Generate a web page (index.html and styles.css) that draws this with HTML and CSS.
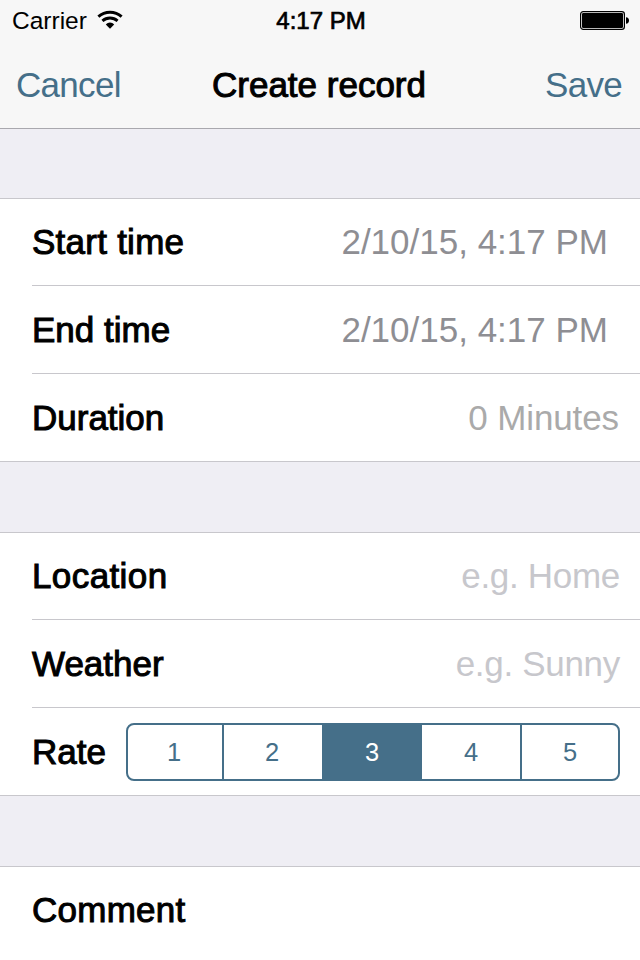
FILE: index.html
```html
<!DOCTYPE html>
<html lang="en">
<head>
<meta charset="utf-8">
<title>Create record</title>
<link rel="stylesheet" href="styles.css">
</head>
<body>
<header class="top">
  <div class="status">
    <div class="carrier"><span>Carrier</span>
      <svg class="wifi" width="26" height="20" viewBox="0 0 26 20" fill="none" stroke="#000">
        <path d="M1.400 6.600C8 .8 18 .8 24.600 6.600" stroke-width="3"/>
        <path d="M5.400 10.900C9.800 7 16.200 7 20.600 10.900" stroke-width="2.800"/>
        <path d="M8.800 14.600C11 11.800 15 11.800 17.200 14.600L13 18.800Z" fill="#000" stroke="none"/>
      </svg>
    </div>
    <div class="clock">4:17 PM</div>
    <svg class="battery" width="50" height="20" viewBox="0 0 50 20">
      <rect x=".6" y=".6" width="43.800" height="17.800" rx="2.600" fill="none" stroke="#000" stroke-width="1.200"/>
      <rect x="2" y="2" width="41" height="15" rx="1.200"/>
      <path d="M46 6.200Q49 6.500 49 9.500T46 12.800Z"/>
    </svg>
  </div>
  <nav class="nav">
    <a class="action">Cancel</a>
    <h1 class="title">Create record</h1>
    <a class="action save">Save</a>
  </nav>
</header>
<main>
  <section class="group first">
    <div class="row"><span class="label">Start time</span><span class="value date">2/10/15, 4:17 PM</span></div>
    <div class="row"><span class="label tight">End time</span><span class="value date">2/10/15, 4:17 PM</span></div>
    <div class="row"><span class="label tight">Duration</span><span class="value computed">0 Minutes</span></div>
  </section>
  <section class="group">
    <div class="row"><span class="label wide">Location</span><span class="value hint">e.g. Home</span></div>
    <div class="row"><span class="label tight">Weather</span><span class="value hint">e.g. Sunny</span></div>
    <div class="row"><span class="label tight">Rate</span>
      <div class="segments"><span>1</span><span>2</span><span class="on">3</span><span>4</span><span>5</span></div>
    </div>
  </section>
  <section class="group last">
    <div class="row"><span class="label">Comment</span></div>
  </section>
</main>
</body>
</html>
```
FILE: styles.css
```css
* { box-sizing: border-box; }
body {
  margin: 0;
  height: 960px;
  overflow: hidden;
  background: #efeef4;
  color: #000;
  font-family: "Liberation Sans", Arial, sans-serif;
  font-size: 35px;
  line-height: 40px;
}
.top {
  height: 129px;
  background: #f7f7f7;
  border-bottom: 1px solid #a9a8ae;
}
.status {
  display: grid;
  grid-template-columns: 1fr auto 1fr;
  align-items: center;
  height: 40px;
  padding: 1px 10px 0 12px;
  font-size: 24.5px;
}
.carrier { display: flex; align-items: center; gap: 10px; }
.wifi { margin-top: -2px; }
.clock { font-size: 24px; -webkit-text-stroke: .7px #000; }
.battery { justify-self: end; }
.nav {
  display: grid;
  grid-template-columns: 1fr auto 1fr;
  align-items: center;
  height: 88px;
  padding: 1px 18px 0 16px;
}
.action { color: #456f89; letter-spacing: -.7px; }
.save { justify-self: end; }
.title {
  margin: 0;
  font-size: 35px;
  font-weight: 400;
  -webkit-text-stroke: 1px #000;
}
.group {
  margin-top: 70px;
  padding-left: 32px;
  background: #fff;
  border-top: 1px solid #c8c7cc;
  border-bottom: 1px solid #c8c7cc;
}
.first { margin-top: 69px; }
.last { border-bottom: 0; }
.row {
  display: flex;
  align-items: center;
  justify-content: space-between;
  height: 88px;
  padding-right: 20px;
  border-bottom: 1px solid #c8c7cc;
}
.row:first-child { height: 87px; }
.row:last-child { height: 87px; border-bottom: 0; }
.last .row:last-child { height: 93px; padding-bottom: 7px; }
.label { letter-spacing: .25px; -webkit-text-stroke: 1px #000; }
.tight { letter-spacing: 0; }
.wide { letter-spacing: .4px; }
.value { color: #8e8e93; }
.date { margin-right: 12px; }
.computed { color: #aaa; letter-spacing: -.1px; margin-right: 1px; }
.hint { color: #c7c7cc; letter-spacing: -.3px; }
.segments {
  display: grid;
  grid-template-columns: 94px 100px 100px 98px 98px;
  width: 494px;
  height: 58px;
  border: 2px solid #456f89;
  border-radius: 8px;
  color: #456f89;
  font-size: 25.5px;
  overflow: hidden;
}
.segments span {
  display: flex;
  align-items: center;
  justify-content: center;
  padding-right: 2px;
}
.segments span + span { border-left: 2px solid #456f89; }
.segments .on { background: #456f89; color: #fff; }
.segments .on + span { border-left: 0; padding-right: 0; }
.segments span:last-child { padding-right: 0; }
```
